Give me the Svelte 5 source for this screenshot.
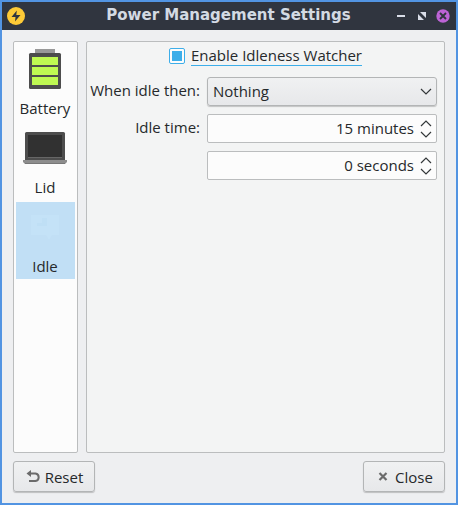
<script>
  let enabled = $state(true);
  let selected = $state('Idle');
  let action = $state('Nothing');
  let minutes = $state(15);
  let seconds = $state(0);

  const pages = ['Battery', 'Lid', 'Idle'];
  const spins = [
    { id: 'minutes', unit: 'minutes', get: () => minutes, set: (v) => (minutes = v) },
    { id: 'seconds', unit: 'seconds', get: () => seconds, set: (v) => (seconds = v) }
  ];

  function step(spin, by) {
    spin.set(Math.min(59, Math.max(0, spin.get() + by)));
  }

  function commit(spin, event) {
    spin.set(Math.min(59, Math.max(0, parseInt(event.target.value) || 0)));
  }
</script>

<div class="window">
  <header>
    <svg class="app-icon" width="18" height="18" viewBox="0 0 18 18" aria-hidden="true">
      <circle cx="9" cy="9" r="9" fill="#fdca37" />
      <path d="M9.800 3.500 4.500 9.900h4l-.500 4.700 5.500-6.600H9.300z" fill="#30353f" />
    </svg>
    <h1>Power Management Settings</h1>
    <div class="controls">
      <button aria-label="Minimize">
        <svg width="14" height="14" viewBox="0 0 14 14"><path d="M3 6h8v2H3z" fill="#d9dde8" /></svg>
      </button>
      <button aria-label="Maximize">
        <svg width="14" height="14" viewBox="0 0 14 14">
          <path d="M5 3h6v6zM3 5l6 6H3z" fill="#d9dde8" />
        </svg>
      </button>
      <button aria-label="Close window">
        <svg width="14" height="14" viewBox="0 0 14 14">
          <circle cx="7" cy="7" r="6.7" fill="#bd63d6" />
          <path d="m4 4 6 6M10 4l-6 6" stroke="#30353f" stroke-width="1.9" />
        </svg>
      </button>
    </div>
  </header>

  <main>
    <div class="body">
      <nav aria-label="Pages">
        {#each pages as page}
          <button class:selected={selected === page} onclick={() => (selected = page)}>
            <svg width="48" height="48" viewBox="0 0 48 48" aria-hidden="true">
              {#if page === 'Battery'}
                <path d="M14 3h20v5H14z" fill="#999" />
                <rect x="8" y="7" width="32" height="36" rx="1.5" fill="#4d4d4d" />
                <path d="M11 11h26v8H11zM11 21h26v8H11zM11 31h26v8H11z" fill="#bff952" />
              {:else if page === 'Lid'}
                <rect x="4" y="7" width="40" height="29" rx="1.5" fill="#4d4d4d" />
                <path d="M7 10h34v22H7z" fill="#313131" />
                <path d="M7 32h34v1H7z" fill="#666" />
                <path d="M2 35h44v2l-2 2H4l-2-2z" fill="#8d8d8d" />
                <path d="M4 38h40v1H4z" fill="#777" />
              {:else}
                <path d="M10 11h28v20h-7l-3 5-3-5H10z" fill="#c4e2f7" />
                <path d="M16 14h10v8H16z" fill="#bfdff5" />
                <path d="M16 14h5v5h-5z" fill="#c4e2f7" />
              {/if}
            </svg>
            <span>{page}</span>
          </button>
        {/each}
      </nav>

      <section>
        <label class="check">
          <input type="checkbox" bind:checked={enabled} />
          <span>Enable Idleness Watcher</span>
        </label>
        <div class="form">
          <label for="action">When idle then:</label>
          <div class="combo">
            <select id="action" bind:value={action}>
              <option>Nothing</option>
              <option>Lock screen</option>
              <option>Suspend</option>
              <option>Hibernate</option>
              <option>Shutdown</option>
            </select>
            <svg width="12" height="7" viewBox="0 0 12 7" aria-hidden="true">
              <path d="m1 1 5 5 5-5" />
            </svg>
          </div>
          <label for="minutes">Idle time:</label>
          {#each spins as spin}
            <div class="spin">
              <input
                id={spin.id}
                type="text"
                aria-label={spin.unit === 'seconds' ? 'Idle time seconds' : undefined}
                value={`${spin.get()} ${spin.unit}`}
                onchange={(e) => commit(spin, e)}
              />
              <div class="steps">
                <button aria-label="Increase {spin.unit}" onclick={() => step(spin, 1)}>
                  <svg width="12" height="7" viewBox="0 0 12 7"><path d="m1 6 5-5 5 5" /></svg>
                </button>
                <button aria-label="Decrease {spin.unit}" onclick={() => step(spin, -1)}>
                  <svg width="12" height="7" viewBox="0 0 12 7"><path d="m1 1 5 5 5-5" /></svg>
                </button>
              </div>
            </div>
          {/each}
        </div>
      </section>
    </div>

    <footer>
      <button>
        <svg width="16" height="16" viewBox="0 0 16 16" aria-hidden="true">
          <path d="M5 4.500h5.500a3.800 3.800 0 0 1 0 7.500H4" fill="none" stroke="#6b6b6b" stroke-width="2" />
          <path d="M1.500 4.500 6 1v7z" fill="#6b6b6b" />
        </svg>
        Reset
      </button>
      <button>
        <svg width="16" height="16" viewBox="0 0 16 16" aria-hidden="true">
          <path d="m4.500 4 7 7M11.500 4l-7 7" stroke="#6b6b6b" stroke-width="2.200" />
        </svg>
        Close
      </button>
    </footer>
  </main>
</div>

<style>
  :global(body) {
    margin: 0;
  }

  .window {
    box-sizing: border-box;
    min-height: 100vh;
    display: flex;
    flex-direction: column;
    border: 2px solid #5294e2;
    background: #eeeff1;
    color: #26292b;
    font: 15px/20px 'Open Sans', 'Noto Sans', sans-serif;
  }

  button,
  input,
  select {
    box-sizing: border-box;
    margin: 0;
    padding: 0;
    border: 0;
    background: none;
    color: inherit;
    font: inherit;
  }

  svg {
    display: block;
    flex: none;
  }

  header {
    display: grid;
    grid-template-columns: 56px 1fr 56px;
    align-items: center;
    height: 28px;
    padding: 0 6px 0 5px;
    background: #30353f;
    color: #d3dae3;
  }

  h1 {
    margin: 0;
    padding-bottom: 2px;
    text-align: center;
    white-space: nowrap;
    font: bold 15px/20px 'DejaVu Sans', sans-serif;
  }

  .controls {
    display: flex;
    justify-content: flex-end;
    gap: 7px;
  }

  main {
    flex: 1;
    display: flex;
    flex-direction: column;
    gap: 8px;
    padding: 11px;
  }

  .body {
    flex: 1;
    display: flex;
    gap: 8px;
  }

  nav,
  section {
    box-sizing: border-box;
    border: 1px solid #bbbdbe;
    border-radius: 2px;
  }

  nav {
    display: flex;
    flex-direction: column;
    gap: 2px;
    width: 65px;
    padding: 2px;
    background: #fcfcfc;
  }

  nav button {
    display: flex;
    flex-direction: column;
    align-items: center;
    gap: 4px;
    padding: 2px 1px 3px 0;
  }

  nav .selected {
    background: #c1dff5;
  }

  section {
    flex: 1;
    padding: 4px 7px;
    background: #f3f4f4;
  }

  .check {
    display: flex;
    justify-content: center;
    align-items: center;
    gap: 6px;
    height: 20px;
  }

  .check input {
    appearance: none;
    width: 16px;
    height: 16px;
    padding: 2px;
    border: 1px solid #3daee9;
    border-radius: 2px;
    background: #fcfcfc content-box;
  }

  .check input:checked {
    background: linear-gradient(#3daee9, #3daee9) content-box, #fcfcfc;
  }

  .check span {
    border-bottom: 1px solid #3daee9;
    line-height: 19px;
  }

  .form {
    display: grid;
    grid-template-columns: 106px 1fr;
    gap: 8px 7px;
    align-items: center;
    margin-top: 11px;
  }

  .form label {
    justify-self: end;
    padding-bottom: 4px;
    white-space: nowrap;
  }

  .combo,
  .spin {
    grid-column: 2;
    box-sizing: border-box;
    display: flex;
    align-items: center;
    height: 29px;
    border: 1px solid #bbbdbe;
    border-radius: 2px;
  }

  .combo,
  footer button {
    border: 1px solid #b3b5b6;
    border-radius: 3px;
    background: linear-gradient(#f0f1f2, #e7e8ea);
    box-shadow: 0 1px 1px #0003;
  }

  .combo {
    display: grid;
    align-items: center;
  }

  .combo select,
  .combo svg {
    grid-area: 1 / 1;
  }

  .combo select {
    appearance: none;
    width: 100%;
    height: 27px;
    padding: 0 20px 2px 5px;
  }

  .combo svg {
    justify-self: end;
    margin-right: 4px;
    pointer-events: none;
  }

  .combo path,
  .steps path {
    fill: none;
    stroke: #34383a;
    stroke-width: 1.2;
  }

  .spin {
    gap: 6px;
    padding: 0 4px;
    background: #fcfcfc;
  }

  .spin input {
    flex: 1;
    min-width: 0;
    padding-bottom: 2px;
    text-align: right;
    outline: none;
  }

  .steps {
    display: flex;
    flex-direction: column;
    gap: 4px;
  }

  footer {
    display: flex;
    justify-content: space-between;
  }

  footer button {
    display: flex;
    justify-content: center;
    align-items: center;
    gap: 4px;
    min-width: 82px;
    height: 31px;
    padding: 0 8px;
  }
</style>
